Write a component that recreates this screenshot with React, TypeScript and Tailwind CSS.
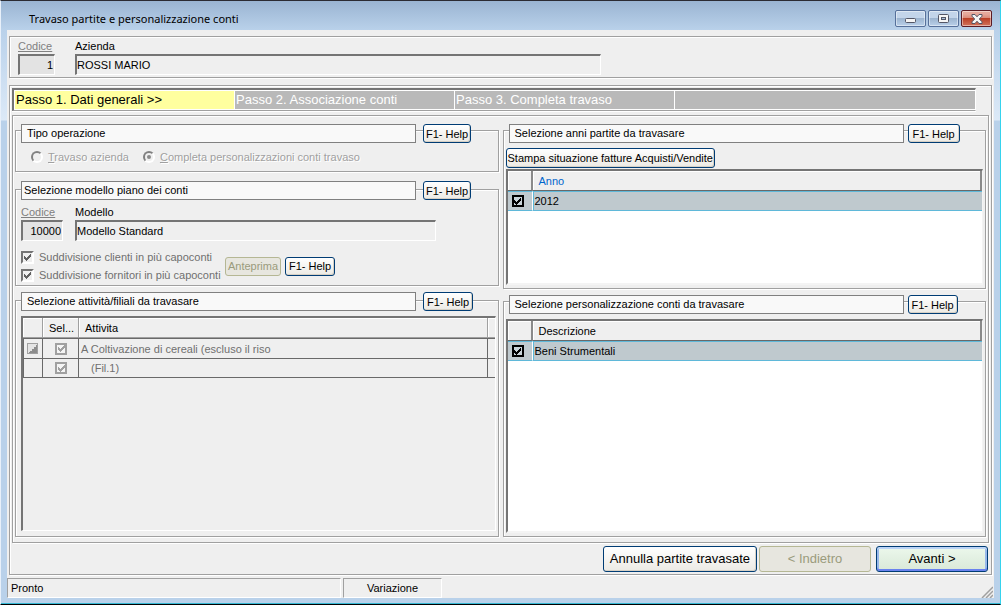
import type { ComponentProps, ReactNode } from "react";
import { clsx } from "clsx";

const etched =
  "border border-[#a0a0a0] shadow-[inset_1px_1px_0_#fff,1px_1px_0_#fff]";
const sunken =
  "border-t-2 border-l-2 border-r border-b border-t-[#747474] border-l-[#747474] border-r-white border-b-white";

function Button({ className, ...props }: ComponentProps<"button">) {
  return (
    <button
      type="button"
      className={clsx(
        "flex items-center justify-center rounded-[3px] border whitespace-nowrap",
        props.disabled
          ? "border-[#b5b794] bg-[#e7e6df] text-[#9a9b7c]"
          : "border-[#003c74] bg-linear-to-b from-white to-[#eceae4] shadow-[inset_-1px_-1px_0_#d6d0c5]",
        className
      )}
      {...props}
    />
  );
}

type CheckProps = {
  label: string;
  look: "field" | "grid" | "solid";
  disabled?: boolean;
};

function Check({ label, look, disabled }: CheckProps) {
  return (
    <span className="grid shrink-0 place-items-center">
      <input
        type="checkbox"
        defaultChecked
        disabled={disabled}
        aria-label={label}
        className={clsx(
          "col-start-1 row-start-1 block appearance-none",
          look === "field" &&
            "size-[13px] border-2 border-t-[#747474] border-l-[#747474] border-r-white border-b-white bg-[#efefef]",
          look === "grid" && "size-3 border-2 border-[#a0a0a0] bg-[#f4f4f4]",
          look === "solid" && "size-3 border-2 border-black bg-[#c8d2d7]"
        )}
      />
      <svg
        viewBox="0 0 7 7"
        shapeRendering="crispEdges"
        className={clsx(
          "pointer-events-none col-start-1 row-start-1 size-[7px]",
          look === "field" && "text-[#606060]",
          look === "grid" && "text-[#a0a0a0]",
          look === "solid" && "text-black"
        )}
      >
        <path
          fill="currentColor"
          d="M0 2h1v3H0zM1 3h1v3H1zM2 4h1v3H2zM3 3h1v3H3zM4 2h1v3H4zM5 1h1v3H5zM6 0h1v3H6z"
        />
      </svg>
    </span>
  );
}

type GroupProps = {
  title: string;
  headClass: string;
  titleClass?: string;
  helpClass: string;
  className?: string;
  children: ReactNode;
};

/* Etched frame whose title bar and help button sit on the top line */
function Group({ title, headClass, titleClass, helpClass, className, children }: GroupProps) {
  return (
    <section className={clsx("flex flex-col", etched, className)}>
      <div className={clsx("flex h-[19px] pl-[5px]", headClass)}>
        <h2
          className={clsx(
            "max-w-[395px] flex-1 border border-[#808080] bg-[#f9f9f9] leading-[17px]",
            titleClass ?? "px-[5px]"
          )}
        >
          {title}
        </h2>
        <Button className={helpClass}>F1- Help</Button>
      </div>
      {children}
    </section>
  );
}

type ListProps = { heading: string; value: string; blue?: boolean; className?: string };

function PickList({ heading, value, blue, className }: ListProps) {
  return (
    <div
      className={clsx(
        "mx-0.5 mb-[3px] flex-1 border-t-2 border-l-2 border-r border-b-2 border-t-[#747474] border-l-[#747474] border-r-[#f4f4f4] border-b-[#f4f4f4] bg-white",
        className
      )}
    >
      <table className="w-full table-fixed border-separate border-spacing-0">
        <thead>
          <tr className="h-5 bg-[#efefef]">
            <th className="w-[25px] border-r-2 border-b border-r-[#8a8a8a] border-b-[#696969] p-0 shadow-[inset_1px_1px_0_#fff]" />
            <th
              className={clsx(
                "border-r-2 border-b border-r-[#8a8a8a] border-b-[#696969] p-0 pl-1.5 text-left font-normal shadow-[inset_1px_1px_0_#fff]",
                blue && "text-[#0066cc]"
              )}
            >
              {heading}
            </th>
          </tr>
        </thead>
        <tbody>
          <tr className="h-5 bg-[#bfc9ce]">
            <td className="border-y border-r border-y-[#5fb8d9] border-r-white p-0 pl-1">
              <div className="flex">
                <Check look="solid" label={value} />
              </div>
            </td>
            <td className="border-y border-l border-[#5fb8d9] p-0 pl-px">{value}</td>
          </tr>
        </tbody>
      </table>
    </div>
  );
}

function TitleBar() {
  const box =
    "flex h-[17px] w-[31px] items-center justify-center rounded-[2px] border shadow-[inset_0_0_0_1px_rgba(255,255,255,0.45)]";
  const blue =
    "border-[#56709a] bg-[linear-gradient(#c3d5ea_0_48%,#9db5d0_50%,#b9d0ea)]";
  return (
    <header className="flex h-[29px] items-start justify-between pr-[8px] pl-7">
      <h1 className="pt-[10px] font-['Noto_Sans',sans-serif] text-[11px] leading-4">
        Travaso partite e personalizzazione conti
      </h1>
      <div className="flex gap-0.5 pt-[9px]">
        <button type="button" aria-label="Riduci a icona" className={clsx(box, blue)}>
          <svg viewBox="0 0 11 5" className="mt-1 h-[5px] w-[11px]">
            <rect x=".5" y=".5" width="10" height="4" rx="1" fill="#f5f5f5" stroke="#535666" />
          </svg>
        </button>
        <button type="button" aria-label="Ingrandisci" className={clsx(box, blue)}>
          <svg viewBox="0 0 11 9" className="h-[9px] w-[11px]">
            <rect x=".5" y=".5" width="10" height="8" rx="1" fill="#f5f5f5" stroke="#535666" />
            <rect x="3.5" y="3.5" width="4" height="2" fill="#a9bfd8" stroke="#535666" />
          </svg>
        </button>
        <button
          type="button"
          aria-label="Chiudi"
          className={clsx(
            box,
            "border-[#5b1b24] bg-[linear-gradient(#e6a99c_0_20%,#d98877_48%,#bb4027_50%,#d2735c)]"
          )}
        >
          <svg viewBox="0 0 12 10" className="h-[10px] w-3">
            <path
              d="M1 .5h3l2 2.3L8 .5h3v1.7L8.300 5 11 7.800v1.700H8L6 7.200 4 9.500H1V7.800L3.700 5 1 2.200z"
              fill="#f5f5f5"
              stroke="#535666"
            />
          </svg>
        </button>
      </div>
    </header>
  );
}

const steps = ["Passo 1. Dati generali >>", "Passo 2. Associazione conti", "Passo 3. Completa travaso"];

function Steps() {
  return (
    <ol className="mr-[15px] ml-0.5 flex h-[23px] border-t-2 border-l-2 border-r border-b border-t-[#747474] border-l-[#747474] border-r-white border-b-[#a0a0a0] bg-[#b9b9b9] pl-px text-[13px] leading-[18px] shadow-[inset_1px_1px_0_#fff,inset_0_-1px_0_#fff,0_1px_0_#fff]">
      {steps.map((step, i) => (
        <li
          key={step}
          className={clsx(
            "my-px w-[220px] border-r border-white pl-px whitespace-nowrap",
            i === 0 ? "bg-[#ffff9f]" : "text-white"
          )}
        >
          {step}
        </li>
      ))}
    </ol>
  );
}

const activities = [
  { name: "A Coltivazione di cereali (escluso il riso", current: true },
  { name: "(Fil.1)", current: false },
];

function Activities() {
  const line = "border-r border-b border-[#696969] p-0";
  const head = "border-r border-b border-[#a0a0a0] p-0 text-left font-normal shadow-[inset_1px_1px_0_#fff]";
  return (
    <div className={clsx("mt-[5px] mr-0.5 mb-[5px] ml-[5px] flex-1", sunken)}>
      <table className="w-full table-fixed border-separate border-spacing-0">
        <thead>
          <tr className="h-5">
            <th className={clsx(head, "w-5")} />
            <th className={clsx(head, "w-9 pl-1.5")}>Sel...</th>
            <th className={clsx(head, "pl-1.5")}>Attivita</th>
            <th className={clsx(head, "w-[7px] border-r-0")} />
          </tr>
        </thead>
        <tbody className="text-[#707070]">
          {activities.map((a, i) => (
            <tr key={a.name} className={i === 0 ? "h-[21px]" : "h-[19px]"}>
              <td className={clsx(line, "border-l", i === 0 && "border-t")}>
                {a.current && (
                  <svg viewBox="0 0 11 11" className="ml-[3px] size-[11px]" shapeRendering="crispEdges">
                    <rect width="11" height="11" fill="#a0a0a0" />
                    <rect x="1" y="1" width="9" height="9" fill="#e4e4e4" />
                    <path d="M10 2v8H2v-1h1V8h2V6h2V4h2V2z" fill="#8c8c8c" />
                  </svg>
                )}
              </td>
              <td className={clsx(line, i === 0 && "border-t")}>
                <div className="ml-3 flex">
                  <Check look="grid" label={a.name} disabled />
                </div>
              </td>
              <td className={clsx(line, i === 0 ? "border-t pl-0.5" : "pl-3")}>{a.name}</td>
              <td className={clsx("border-b border-[#696969] p-0", i === 0 && "border-t")} />
            </tr>
          ))}
        </tbody>
      </table>
    </div>
  );
}

type FieldProps = { label: string; id: string; value: string; code?: boolean; className: string };

function Field({ label, id, value, code, className }: FieldProps) {
  return (
    <div className={clsx("flex flex-col", className)}>
      <label htmlFor={id} className={clsx("h-4 leading-4", code && "text-[#808080] underline")}>
        {label}
      </label>
      <input
        id={id}
        readOnly
        defaultValue={value}
        className={clsx(
          "h-[21px] w-full leading-[18px] outline-none",
          sunken,
          code ? "bg-[#e3e3e3] pr-px text-right" : "bg-[#efefef]"
        )}
      />
    </div>
  );
}

type RadioProps = { text: string; checked?: boolean };

function Radio({ text, checked }: RadioProps) {
  return (
    <label className="flex items-center gap-[5px] whitespace-nowrap text-[#a0a0a0] [text-shadow:1px_1px_0_#fff]">
      <span className="grid place-items-center">
        <input
          type="radio"
          name="tipo"
          disabled
          defaultChecked={checked}
          className="col-start-1 row-start-1 size-3 appearance-none rounded-full border-2 border-t-[#808080] border-r-white border-b-white border-l-[#808080]"
        />
        {checked && <span className="col-start-1 row-start-1 size-1 rounded-full bg-[#8a8a8a]" />}
      </span>
      <span>
        <span className="underline">{text[0]}</span>
        {text.slice(1)}
      </span>
    </label>
  );
}

function SplitOption({ text }: { text: string }) {
  return (
    <label className="flex h-[18px] items-center gap-[5px] whitespace-nowrap">
      <Check look="field" label={text} disabled />
      {text}
    </label>
  );
}

export default function App() {
  return (
    <div className="flex min-h-screen flex-col border-t border-r border-b border-l border-t-[#2b2b33] border-r-[#35d3ee] border-b-black border-l-[#e8f0fa] bg-[linear-gradient(#9ab4d2_0,#b9d1ea_29px,#dce9f7_119px,#b9d1ea_120px)] font-['Liberation_Sans',Arial,sans-serif] text-[11px] leading-4 text-black">
      <TitleBar />

      <main className="mx-1.5 flex flex-1 flex-col bg-[#efefef] pt-1.5">
        {/* Company */}
        <div className={clsx("mx-0.5 flex gap-5 pt-px pb-0.5 pl-2", etched)}>
          <Field id="azienda-codice" label="Codice" value="1" code className="w-[37px]" />
          <Field id="azienda" label="Azienda" value="ROSSI MARIO" className="w-[526px]" />
        </div>

        <div className={clsx("mx-0.5 mt-[7px] flex flex-1 flex-col pt-0.5", etched)}>
          <Steps />

          <div className={clsx("mx-0.5 mt-1 grid flex-1 grid-cols-2 gap-1 px-0.5 pt-3.5 pb-[5px]", etched)}>
            {/* Left column */}
            <div className="flex flex-col">
              <Group
                title="Tipo operazione"
                headClass="-mt-[7px] gap-[7px]"
                helpClass="w-12"
                className="h-[42px]"
              >
                <div className="mt-1.5 flex gap-3.5 pl-[15px]">
                  <Radio text="Travaso azienda" />
                  <Radio text="Completa personalizzazioni conti travaso" checked />
                </div>
              </Group>

              <Group
                title="Selezione modello piano dei conti"
                headClass="-mt-[9px] gap-[7px]"
                titleClass="px-0.5"
                helpClass="w-12"
                className="mt-[17px]"
              >
                <div className="mt-1 flex gap-3 pl-[5px]">
                  <Field id="modello-codice" label="Codice" value="10000" code className="w-[42px]" />
                  <Field id="modello" label="Modello" value="Modello Standard" className="w-[361px]" />
                </div>
                <div className="mt-[7px] flex pb-px pl-[5px] text-[#707070]">
                  <div className="w-[204px]">
                    <SplitOption text="Suddivisione clienti in più capoconti" />
                    <SplitOption text="Suddivisione fornitori in più capoconti" />
                  </div>
                  <div className="flex h-[19px] gap-1 self-center">
                    <Button disabled className="w-14">
                      Anteprima
                    </Button>
                    <Button className="w-[50px] text-black">F1- Help</Button>
                  </div>
                </div>
              </Group>

              <Group
                title="Selezione attività/filiali da travasare"
                headClass="-mt-[9px] gap-[7px]"
                helpClass="w-[50px]"
                className="mt-3.5 flex-1"
              >
                <Activities />
              </Group>
            </div>

            {/* Right column */}
            <div className="flex flex-col">
              <Group
                title="Selezione anni partite da travasare"
                headClass="-mt-[7px] gap-1"
                helpClass="w-[52px]"
                className="h-[159px]"
              >
                <Button className="mt-[5px] ml-0.5 h-5 self-start px-px">
                  Stampa situazione fatture Acquisti/Vendite
                </Button>
                <PickList heading="Anno" value="2012" blue className="mt-px" />
              </Group>

              <Group
                title="Selezione personalizzazione conti da travasare"
                headClass="-mt-[7px] gap-1"
                helpClass="w-[50px]"
                className="mt-3 flex-1"
              >
                <PickList heading="Descrizione" value="Beni Strumentali" className="mt-[5px]" />
              </Group>
            </div>
          </div>

          {/* Wizard buttons */}
          <div className="flex justify-end gap-0.5 pt-[3px] pr-[3px] pb-0.5 text-[13px]">
            <Button className="h-[26px] px-1.5">Annulla partite travasate</Button>
            <Button disabled className="h-[26px] w-28">
              &lt; Indietro
            </Button>
            <button
              type="button"
              className="ml-[3px] h-[26px] w-28 rounded-[3px] border border-[#003c74] bg-linear-to-b from-[#ecf8ec] to-[#d9e8d8] shadow-[inset_0_2px_0_#bcd4f6,inset_0_-2px_0_#6982ee,inset_2px_0_0_#98b8ea,inset_-2px_0_0_#98b8ea]"
            >
              Avanti &gt;
            </button>
          </div>
        </div>

        {/* Status bar */}
        <footer className="mt-[3px] flex h-5 gap-0.5 leading-[18px]">
          <div className="w-[334px] border-t border-r border-b border-l border-t-[#a0a0a0] border-r-white border-b-white border-l-[#a0a0a0] pl-[3px]">
            Pronto
          </div>
          <div className="w-[99px] border-t border-r border-b border-l border-t-[#a0a0a0] border-r-white border-b-white border-l-[#a0a0a0] text-center">
            Variazione
          </div>
          <svg viewBox="0 0 12 12" className="mr-px ml-auto size-3 self-end">
            <path d="M1 12 12 1M5 12l7-7M9 12l3-3" stroke="#a0a0a0" strokeWidth="1.500" />
          </svg>
        </footer>
      </main>
      <div className="h-1.5 border-b border-[#35b8d3]" />
    </div>
  );
}
